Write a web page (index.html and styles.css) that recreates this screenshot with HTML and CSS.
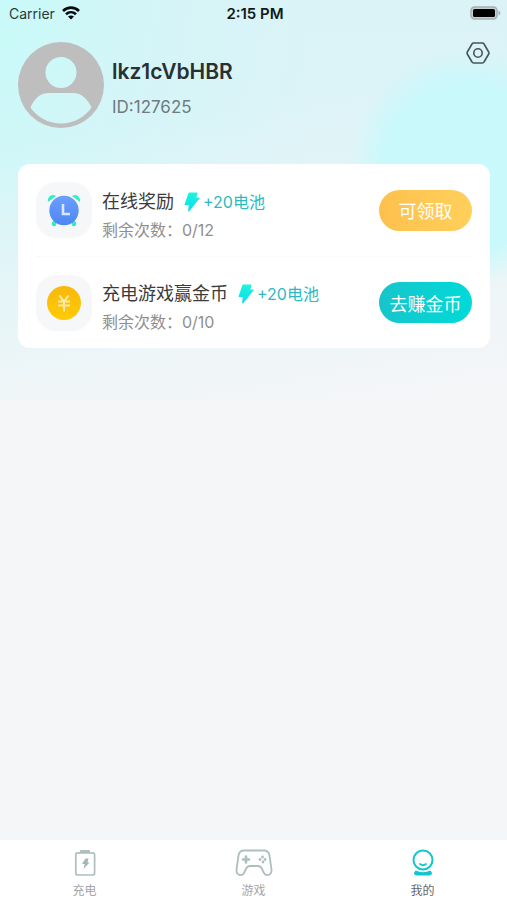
FILE: index.html
```html
<!DOCTYPE html>
<html lang="zh-CN">
<head>
<meta charset="utf-8">
<meta name="viewport" content="width=device-width, initial-scale=1">
<title>我的</title>
<link rel="stylesheet" href="styles.css">
</head>
<body>
<svg class="defs" aria-hidden="true">
  <defs>
    <linearGradient id="bolt-fill" x1="0" y1="0" x2="0" y2="1"><stop offset="0" stop-color="#1df3dc"/><stop offset="1" stop-color="#0bdcf0"/></linearGradient>
    <linearGradient id="clock-fill" x1="0" y1="0" x2="0" y2="1"><stop offset="0" stop-color="#6b9fff"/><stop offset="1" stop-color="#4d86f3"/></linearGradient>
    <linearGradient id="coin-fill" x1="0" y1="0" x2="0" y2="1"><stop offset="0" stop-color="#f8b80c"/><stop offset="1" stop-color="#ffcb05"/></linearGradient>
    <symbol id="bolt" viewBox="0 0 16 20"><path d="M5 1.200h8l-1.500 5h3.500L4.800 18.800l.5-6.300H1.200z" fill="url(#bolt-fill)" stroke="url(#bolt-fill)" stroke-width="1.200" stroke-linejoin="round"/></symbol>
  </defs>
</svg>
<div class="page">
  <header class="status">
    <div class="carrier">
      <span>Carrier</span>
      <svg width="18" height="14" viewBox="0 0 18 14" aria-hidden="true"><g fill="none" stroke="#050b0c" stroke-width="2.600"><path d="M1 5C5.600.500 12.400.500 17 5"/><path d="M4 8.300c3-2.800 7-2.800 10 0"/></g><path d="M6 10.500c1.800-1.500 4.200-1.500 6 0l-3 3z" fill="#050b0c"/></svg>
    </div>
    <time class="clock">2:15 PM</time>
    <svg class="battery" width="31" height="14" viewBox="0 0 31 14" aria-hidden="true"><rect x="1" y="1" width="26" height="12" rx="3.500" fill="#c3d0d2" stroke="#a3b0b2" stroke-width="1.500"/><rect x="3" y="3" width="22" height="8" rx="1.500" fill="#000"/><path d="M28.500 4.500c2.400 1 2.400 4 0 5z" fill="#a3b0b2"/></svg>
  </header>
  <main class="content">
    <section class="profile">
      <svg class="avatar" viewBox="0 0 86 86" aria-hidden="true"><path fill="#bfbebf" fill-rule="evenodd" d="M43 0a43 43 0 1 1 0 86a43 43 0 0 1 0-86zM43 15a15.500 15.500 0 1 0 0 31a15.500 15.500 0 0 0 0-31zM31 51C22 51 16 57 12.500 65.500C19 75 30 81.500 43 81.500S67 75 73.500 65.500C70 57 63 51 55 51z"/></svg>
      <div class="identity">
        <h1 class="name">lkz1cVbHBR</h1>
        <p class="uid">ID:127625</p>
      </div>
      <button class="settings" type="button" aria-label="设置"><svg width="24" height="22" viewBox="0 0 24 22" fill="none" stroke="#475557" stroke-width="1.600" stroke-linejoin="round"><path d="M7.500 1h9q1 0 1.500 1l4.700 8q.500 1 0 2L18 20q-.500 1-1.500 1h-9Q6.500 21 6 20L1.300 12q-.500-1 0-2L6 2q.500-1 1.500-1z"/><circle cx="12" cy="11" r="4.200"/></svg></button>
    </section>
    <ul class="tasks">
      <li class="task">
        <span class="task-icon"><svg width="34" height="34" viewBox="0 0 34 34" aria-hidden="true"><g fill="#2cf0c5"><path d="M1 9C0 4 5 0 9 3zM33 9C34 4 29 0 25 3z"/><circle cx="7" cy="31" r="2.300"/><circle cx="27" cy="31" r="2.300"/></g><path d="M9 27l-3 4M25 27l3 4" stroke="#2cf0c5" stroke-width="3"/><circle cx="17" cy="17.500" r="14.700" fill="url(#clock-fill)"/><path d="M16 11v10h7" fill="none" stroke="#dbe7ff" stroke-width="2.600"/></svg></span>
        <div class="task-text">
          <div class="task-line"><h2 class="task-title">在线奖励</h2><span class="reward"><svg width="16" height="20" aria-hidden="true"><use href="#bolt"/></svg>+20电池</span></div>
          <p class="remaining">剩余次数：0/12</p>
        </div>
        <button class="pill pill-amber" type="button">可领取</button>
      </li>
      <li class="task">
        <span class="task-icon"><svg width="34" height="34" viewBox="0 0 34 34" aria-hidden="true"><circle cx="17" cy="17" r="17" fill="url(#coin-fill)"/><path d="M12.500 9.500l4.500 6l4.500-6M11 15.500h12M11 19.500h12M17 15v10.500" fill="none" stroke="#ffe9a8" stroke-width="2"/></svg></span>
        <div class="task-text">
          <div class="task-line"><h2 class="task-title">充电游戏赢金币</h2><span class="reward"><svg width="16" height="20" aria-hidden="true"><use href="#bolt"/></svg>+20电池</span></div>
          <p class="remaining">剩余次数：0/10</p>
        </div>
        <button class="pill pill-teal" type="button">去赚金币</button>
      </li>
    </ul>
  </main>
  <nav class="tabs">
    <a class="tab" href="#charge"><svg width="38" height="28" viewBox="0 0 38 28" aria-hidden="true"><rect x="9.800" y="3.800" width="18.800" height="22.200" rx="2" fill="none" stroke="#afbfbe" stroke-width="1.700"/><path d="M14 3.500V2q0-1 1-1h8q1 0 1 1v1.500z" fill="#afbfbe"/><path d="M19.500 9.500h3l-1 4h2l-6 6.500l1.200-5H16z" fill="#a3b5b4"/></svg>充电</a>
    <a class="tab" href="#games"><svg width="38" height="28" viewBox="0 0 38 28" aria-hidden="true"><path d="M9 1.500h20c3.500 0 5 2 5.500 5l2 14c.500 6-5.500 7-7.500 3.500l-2.200-4.500c-1-2-2-2.500-3.800-2.500h-8c-1.800 0-2.800.500-3.800 2.500L9 24c-2 3.500-8 2.500-7.500-3.500l2-14c.500-3 2-5 5.500-5z" fill="none" stroke="#afbfbe" stroke-width="1.800"/><path d="M11 7.500v6M8 10.500h6" stroke="#afbfbe" stroke-width="2.600" stroke-linecap="round"/><g fill="#afbfbe"><circle cx="27.500" cy="8" r="1.400"/><circle cx="25" cy="10.500" r="1.400"/><circle cx="30" cy="10.500" r="1.400"/><circle cx="28" cy="13" r="1.400"/></g></svg>游戏</a>
    <a class="tab tab-active" href="#me" aria-current="page"><svg width="38" height="28" viewBox="0 0 38 28" aria-hidden="true"><path d="M12 21.500c4.500 2.300 9.500 2.300 14 0c3 1.500 2.500 5-1 5H13c-3.500 0-4-3.500-1-5z" fill="#12c6cc"/><circle cx="19" cy="11" r="10.700" fill="#fff"/><circle cx="19" cy="11" r="9.500" fill="#fff" stroke="#12c6cc" stroke-width="2"/><path d="M16 15q3 2.500 6 0" fill="none" stroke="#12c6cc" stroke-width="1.800" stroke-linecap="round"/></svg>我的</a>
  </nav>
</div>
</body>
</html>
```
FILE: styles.css
```css
* {
  box-sizing: border-box;
}

body,
h1,
h2,
p,
ul {
  margin: 0;
  padding: 0;
}

body {
  font-family: Inter, "Noto Sans CJK SC", sans-serif;
  background: #f5f6f8;
}

button {
  border: 0;
  padding: 0;
  background: none;
  font: inherit;
}

svg {
  display: block;
}

.defs {
  position: absolute;
  width: 0;
  height: 0;
}

/* The tint behind the header fades out before the plain page colour starts. */
.page {
  display: flex;
  flex-direction: column;
  min-height: 100vh;
  background-color: #f5f6f8;
  background-image:
    radial-gradient(circle 118px at 92% 168px, #c9f9fb 0%, #c9f9fb 70%, rgba(201, 249, 251, 0) 100%),
    linear-gradient(170deg, rgba(245, 246, 248, 0) 30%, #f5f6f8 98%),
    radial-gradient(ellipse 320px 520px at 0 0, #c8faf9 0%, rgba(208, 246, 248, 0.5) 50%, rgba(223, 243, 247, 0) 100%),
    linear-gradient(#dbf3f7, #dff3f7);
  background-size: 100% 400px;
  background-repeat: no-repeat;
}

.status {
  display: grid;
  grid-template-columns: 1fr auto 1fr;
  align-items: center;
  height: 26px;
  padding: 0 6px 0 9px;
  color: #10191b;
  font-size: 14px;
}

.carrier {
  display: flex;
  align-items: center;
  gap: 7px;
  color: #2c393b;
}

.clock {
  font-size: 15px;
  font-weight: 600;
}

.battery {
  justify-self: end;
}

.content {
  flex: 1;
  padding: 16px 17px 0 18px;
}

.profile {
  display: flex;
  gap: 8px;
}

.avatar {
  width: 86px;
  height: 86px;
}

.identity {
  flex: 1;
  padding-top: 16px;
}

.name {
  color: #293033;
  font-size: 21px;
  font-weight: 600;
  line-height: 28px;
}

.uid {
  margin-top: 9px;
  color: #6f7b7e;
  font-size: 17px;
  line-height: 24px;
}

.settings {
  align-self: flex-start;
}

.tasks {
  margin-top: 36px;
  padding: 0 18px;
  border-radius: 12px;
  background: #fff;
  list-style: none;
}

.task {
  display: flex;
  align-items: center;
  gap: 10px;
  height: 92px;
}

.task + .task {
  border-top: 1px solid #fafafb;
}

.task-icon {
  display: grid;
  place-items: center;
  flex: none;
  width: 56px;
  height: 56px;
  border-radius: 20px;
  background: #f5f7f9;
}

.task-text {
  flex: 1;
  padding-top: 10px;
}

.task-line {
  display: flex;
  align-items: center;
  gap: 10px;
}

.task-title {
  color: #3b3b3b;
  font-size: 18px;
  font-weight: 400;
  line-height: 30px;
}

.reward {
  display: flex;
  align-items: center;
  gap: 3px;
  color: #2abac3;
  font-size: 16px;
  line-height: 30px;
}

.remaining {
  color: #8f8f8f;
  font-size: 16px;
  line-height: 27px;
}

.pill {
  width: 93px;
  height: 41px;
  border-radius: 21px;
  color: #fff;
  font-size: 18px;
}

.pill-amber {
  background: linear-gradient(90deg, #fdc04d, #ffd05b);
}

.pill-teal {
  background: linear-gradient(90deg, #17c5cb, #00dad8);
}

.tabs {
  display: flex;
  height: 60px;
  background: #fff;
}

.tab {
  display: flex;
  flex: 1;
  flex-direction: column;
  align-items: center;
  gap: 5px;
  padding-top: 9px;
  color: #a5a5a5;
  font-size: 12px;
  line-height: 18px;
  text-decoration: none;
}

.tab-active {
  color: #666;
}
```
